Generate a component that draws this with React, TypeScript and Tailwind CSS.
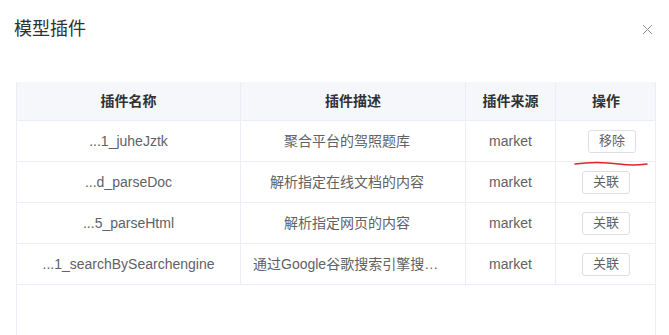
import React from 'react';

const rows = [
  { name: '...1_juheJztk', desc: '聚合平台的驾照题库', source: 'market', action: '移除' },
  { name: '...d_parseDoc', desc: '解析指定在线文档的内容', source: 'market', action: '关联' },
  { name: '...5_parseHtml', desc: '解析指定网页的内容', source: 'market', action: '关联' },
  { name: '...1_searchBySearchengine', desc: '通过Google谷歌搜索引擎搜索网页内容', source: 'market', action: '关联' },
];

const cols = 'grid grid-cols-[224px_225px_90px_100px]';

const App = () => {
  return (
    <div className="h-[335px] w-[669px] overflow-hidden bg-white text-[14px] text-[#606266]" style={{ fontFamily: '"Liberation Sans", "Noto Sans CJK SC", sans-serif' }}>
      <div className="flex items-center justify-between pl-[14px] pr-[16px] pt-[16px]">
        <h1 className="text-[18px] leading-[26px] text-[#303133]">模型插件</h1>
        <svg width="11" height="11" viewBox="0 0 11 11" className="mt-[1px]">
          <path d="M1 1L10 10M10 1L1 10" stroke="#909399" strokeWidth="1" fill="none" />
        </svg>
      </div>

      <div className="relative ml-[16px] mt-[40px] h-[260px] w-[640px] border-r border-l border-[#ebeef5]">
        <div className={`${cols} h-[39px] bg-[#f5f7fa] font-bold text-[#303133] border-b border-[#ebeef5]`}>
          {['插件名称', '插件描述', '插件来源', '操作'].map((h, i) => (
            <div key={h} className={`flex items-center justify-center ${i < 3 ? 'border-r border-[#ebeef5]' : ''}`}>{h}</div>
          ))}
        </div>
        {rows.map((r, idx) => (
          <div key={r.name} className={`${cols} h-[41px] border-b border-[#ebeef5]`}>
            <div className="flex items-center justify-center border-r border-[#ebeef5] px-2 truncate">{r.name}</div>
            <div className="flex items-center justify-center overflow-hidden border-r border-[#ebeef5] pl-[12px] pr-[24px] min-w-0">
              <span className="block min-w-0 max-w-full truncate">{r.desc}</span>
            </div>
            <div className="flex items-center justify-center border-r border-[#ebeef5]">{r.source}</div>
            <div className="flex items-center justify-center">
              <button className={`h-[23px] w-[48px] rounded-[3px] border border-[#dcdfe6] bg-white text-[13px] text-[#606266] ${idx === 0 ? 'ml-[12px]' : ''}`}>{r.action}</button>
            </div>
          </div>
        ))}
        <svg className="absolute left-[557px] top-[78px]" width="74" height="8" viewBox="0 0 74 8">
          <path d="M1 4 C 15 2, 30 2, 45 4 S 65 5, 73 4" stroke="#e8202a" strokeWidth="1.6" fill="none" strokeLinecap="round" />
        </svg>
      </div>
    </div>
  );
};

export default App;
